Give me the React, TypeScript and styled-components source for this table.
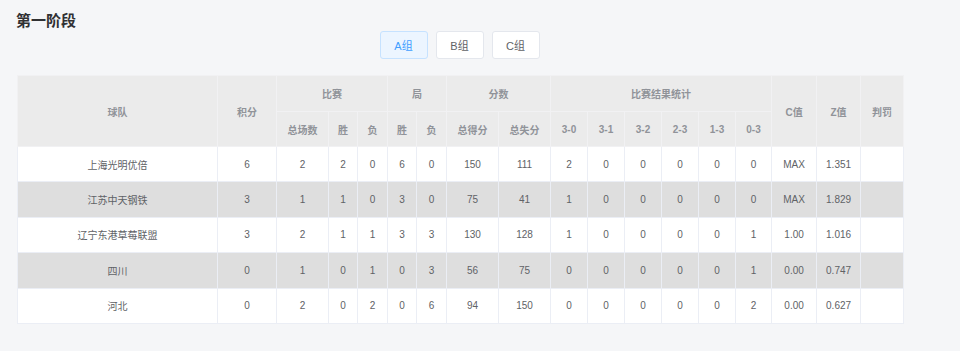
import React, { useState } from "react";
import styled, { createGlobalStyle } from "styled-components";

const GlobalStyle = createGlobalStyle`
  body {
    margin: 0;
    background: #f5f6f8;
    font-family: "Liberation Sans", "Noto Sans CJK SC", sans-serif;
  }
`;

type Row = {
  team: string;
  values: (string | number)[];
};

const rows: Row[] = [
  { team: "上海光明优倍", values: [6, 2, 2, 0, 6, 0, 150, 111, 2, 0, 0, 0, 0, 0, "MAX", "1.351", ""] },
  { team: "江苏中天钢铁", values: [3, 1, 1, 0, 3, 0, 75, 41, 1, 0, 0, 0, 0, 0, "MAX", "1.829", ""] },
  { team: "辽宁东港草莓联盟", values: [3, 2, 1, 1, 3, 3, 130, 128, 1, 0, 0, 0, 0, 1, "1.00", "1.016", ""] },
  { team: "四川", values: [0, 1, 0, 1, 0, 3, 56, 75, 0, 0, 0, 0, 0, 1, "0.00", "0.747", ""] },
  { team: "河北", values: [0, 2, 0, 2, 0, 6, 94, 150, 0, 0, 0, 0, 0, 2, "0.00", "0.627", ""] },
];

const colWidths = [200, 59, 52, 29, 30, 29, 30, 52, 52, 37, 37, 37, 37, 37, 36, 45, 44, 43];

const groups = ["A组", "B组", "C组"];

const App: React.FC = () => {
  const [group, setGroup] = useState("A组");

  return (
    <Page>
      <GlobalStyle />
      <Title>第一阶段</Title>
      <Tabs>
        {groups.map((g) => (
          <GroupButton key={g} $active={group === g} onClick={() => setGroup(g)}>
            {g}
          </GroupButton>
        ))}
      </Tabs>
      <Table>
        <colgroup>
          {colWidths.map((w, i) => (
            <col key={i} style={{ width: w }} />
          ))}
        </colgroup>
        <thead>
          <HeadRow $h={36}>
            <Th rowSpan={2}>球队</Th>
            <Th rowSpan={2}>积分</Th>
            <Th colSpan={3}>比赛</Th>
            <Th colSpan={2}>局</Th>
            <Th colSpan={2}>分数</Th>
            <Th colSpan={6}>比赛结果统计</Th>
            <Th rowSpan={2}>C值</Th>
            <Th rowSpan={2}>Z值</Th>
            <Th rowSpan={2}>判罚</Th>
          </HeadRow>
          <HeadRow $h={35}>
            {["总场数", "胜", "负", "胜", "负", "总得分", "总失分", "3-0", "3-1", "3-2", "2-3", "1-3", "0-3"].map(
              (t, i) => (
                <Th key={i}>{t}</Th>
              )
            )}
          </HeadRow>
        </thead>
        <tbody>
          {rows.map((r, i) => (
            <BodyRow key={r.team} $striped={i % 2 === 1}>
              <Td>{r.team}</Td>
              {r.values.map((v, j) => (
                <Td key={j}>{v}</Td>
              ))}
            </BodyRow>
          ))}
        </tbody>
      </Table>
    </Page>
  );
};

export default App;

const Page = styled.div`
  padding: 11px 16px 28px 17px;
`;

const Title = styled.h2`
  margin: 0 0 0 -1px;
  font-size: 15px;
  line-height: 20px;
  font-weight: bold;
  color: #303133;
`;

const Tabs = styled.div`
  width: 885px;
  display: flex;
  justify-content: center;
  gap: 8px;
  margin-bottom: 16px;
`;

const GroupButton = styled.button<{ $active: boolean }>`
  width: 48px;
  height: 28px;
  padding: 0;
  border-radius: 3px;
  font-family: inherit;
  font-size: 11px;
  cursor: pointer;
  border: 1px solid ${({ $active }) => ($active ? "#c6e2ff" : "#e4e7ed")};
  background: ${({ $active }) => ($active ? "#ecf5ff" : "#ffffff")};
  color: ${({ $active }) => ($active ? "#409eff" : "#606266")};
`;

const Table = styled.table`
  width: 887px;
  table-layout: fixed;
  border-collapse: collapse;
  font-size: 10px;
`;

const HeadRow = styled.tr<{ $h: number }>`
  height: ${({ $h }) => $h}px;
  background: #ebebeb;
`;

const Th = styled.th`
  border: 1px solid #f1f1f3;
  padding: 0;
  text-align: center;
  font-weight: bold;
  color: #909399;
`;

const BodyRow = styled.tr<{ $striped: boolean }>`
  height: 35.4px;
  background: ${({ $striped }) => ($striped ? "#dedede" : "#ffffff")};
`;

const Td = styled.td`
  border: 1px solid #ebeef5;
  padding: 0;
  text-align: center;
  color: #606266;
`;
